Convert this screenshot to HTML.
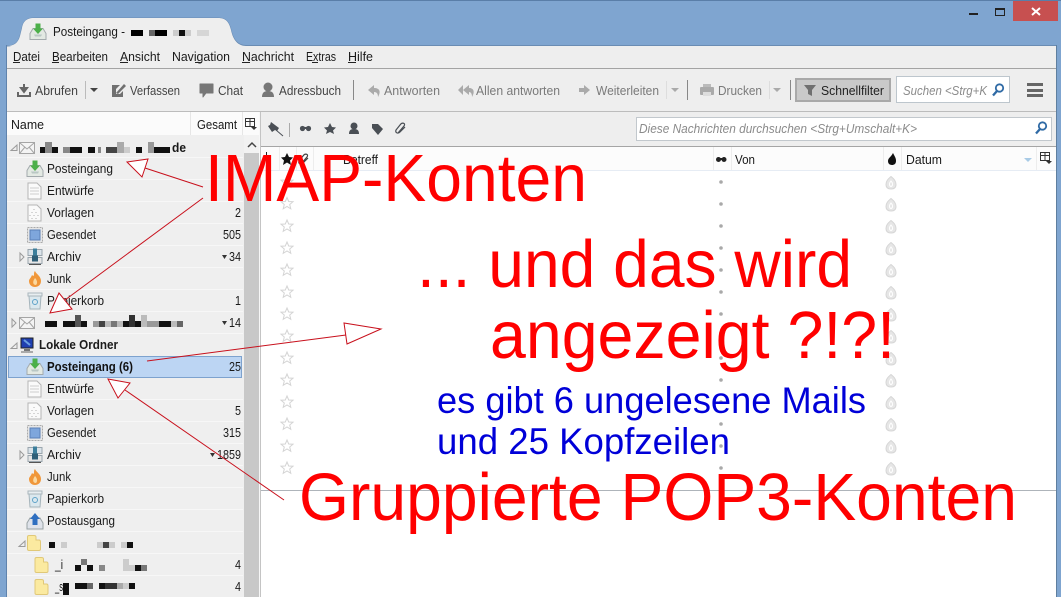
<!DOCTYPE html>
<html><head><meta charset="utf-8"><style>
html,body{margin:0;padding:0;background:#7fa5d0;overflow:hidden}
svg{display:block;position:absolute;left:0;top:0}
text{font-family:"Liberation Sans",sans-serif;font-size:12.5px;fill:#1a1a1a}
.h{fill:#8b8b8b;font-style:italic}
.d{fill:#444}.l{fill:#7a7a7a}
.r{fill:#f00;font-size:67px}.b{fill:#0000d8;font-size:37px}
</style></head><body>
<svg width="1061" height="597" viewBox="0 0 1061 597" xmlns="http://www.w3.org/2000/svg">
<defs>
<g id="inbox"><path d="M-8 2 L-5 -3 H5 L8 2 V8 H-8Z" fill="#e3e9e3" stroke="#a3aaad"/><path d="M-4 3 H4 L3 5 H-3Z" fill="#b9c7c4"/><path d="M-2.500 -8 H2.500 V-3 H5 L0 2.500 L-5 -3 H-2.500Z" fill="#4cb04a"/></g>
<g id="draft"><path d="M-6 -8 H3 L7 -4 V8 H-6Z" fill="#fafafa" stroke="#b5b5b5"/><path d="M-4 -3 H5 M-4 0 H5 M-4 3 H5" stroke="#cfcfcf"/></g>
<g id="tmpl"><path d="M-6 -8 H3 L7 -4 V8 H-6Z" fill="#fafafa" stroke="#b5b5b5"/><path d="M0 -4 V-3 M-2 -1 V0 M2 -1 V0 M-4 2 V3 M0 2 V3 M4 2 V3 M-2 5 V6 M2 5 V6" stroke="#b0b0b0"/></g>
<g id="sent"><rect x="-7.500" y="-7.500" width="15" height="15" fill="#e6e6e6" stroke="#aaa" stroke-dasharray="2 1"/><rect x="-5" y="-5" width="10" height="10" fill="#7ea6dc" stroke="#5a80b8"/></g>
<g id="arch"><rect x="-7" y="-7" width="14" height="6" fill="#dbe4ea" stroke="#9aa5ad"/><rect x="-7" y="1" width="14" height="6" fill="#e6e6e6" stroke="#9aa5ad"/><rect x="-2" y="-8" width="4" height="7" fill="#3d7f9c"/><rect x="-3" y="-1" width="6" height="6" fill="#2f5f78"/><path d="M-6 8 H6" stroke="#555"/></g>
<g id="junk"><path d="M0 -8 C1 -5 6 -3 6 2 C6 6 3 8 0 8 C-4 8 -6 5 -6 2 C-6 0 -4 -1 -3 -4 C-2 -3 -1 -3 -1 -4 C-1 -6 -1 -7 0 -8Z" fill="#f0973a"/><path d="M0 -1 C2 1 3 4 1 6 C-2 6 -3 3 0 -1Z" fill="#fbd9a0"/></g>
<g id="trash"><path d="M-6 -5 H6 L5 8 H-5Z" fill="#dbe8ee" stroke="#a5b4bb"/><rect x="-7" y="-8" width="14" height="3" fill="#e8eef1" stroke="#aab6bc"/><circle r="2.500" cy="1" fill="none" stroke="#5ea2c8"/></g>
<g id="out"><path d="M-8 2 L-5 -3 H5 L8 2 V8 H-8Z" fill="#dfe3ea" stroke="#9aa3a6"/><path d="M-2.500 4 V-2 H-5 L0 -8 L5 -2 H2.500 V4Z" fill="#2f6fc0"/></g>
<path id="fold" d="M-6.500 -6 Q-6.500 -7.500 -5 -7.500 H0 Q2 -7.500 2 -6 V-3 H5 Q6.500 -3 6.500 -1 V6 Q6.500 7.500 5 7.500 H-5 Q-6.500 7.500 -6.500 6Z" fill="#fbeaa0" stroke="#e0c878"/>
<g id="env"><rect x="-7.500" y="-5.500" width="15" height="11" fill="#f4f4f4" stroke="#a5a5a5"/><path d="M-7 -5 L0 1 L7 -5 M-7 5 L-2 -1 M7 5 L2 -1" fill="none" stroke="#a5a5a5"/></g>
<path id="tri" d="M0 -4 V4 L4 0Z" fill="none" stroke="#9a9a9a"/>
<path id="open" d="M3 -3 V2.500 H-3Z" fill="none" stroke="#9a9a9a"/>
<path id="star" d="M0 -6 L1.700 -2 L6 -1.800 L2.700 1 L3.800 5.300 L0 3 L-3.800 5.300 L-2.700 1 L-6 -1.800 L-1.700 -2Z" fill="#fff" stroke="#d4d4d4"/>
<g id="flame"><path d="M0 -6.500 C3 -4 5 -2 5 1.500 C5 4.500 3 6 0 6 C-3 6 -5 4.500 -5 1.500 C-5 -2 -3 -4 0 -6.500Z" fill="#e6e6e6" stroke="#d6d6d6"/><path d="M0 -2 C-2 0 -2 3 0 3.500 C2 3 2 0 0 -2Z" fill="none" stroke="#fff"/></g>
<g id="pick"><rect x="-4.500" y="-5.500" width="9" height="8" fill="none" stroke="#333"/><path d="M-4 -2.500 H4 M0 -5 V2" stroke="#333"/><path d="M1 3 H7 L4 6Z" fill="#333"/></g>
<g id="lens"><circle cx="1.500" cy="-2" r="3.700" fill="#fff" stroke="#2f6aa5" stroke-width="1.800"/><path d="M-1 1 L-5 5.500" stroke="#2f6aa5" stroke-width="2.300"/></g>
</defs>

<!-- window -->
<rect width="1061" height="597" fill="#7fa5d0"/>
<rect width="1061" height="1" fill="#5a7ea8"/>
<rect x="1013" y="1" width="45" height="20" fill="#c75050"/>
<path d="M1032 8 L1040 15 M1040 8 L1032 15" stroke="#fff" stroke-width="2"/>
<rect x="969" y="13" width="9" height="2" fill="#222"/>
<rect x="995.500" y="8.500" width="9" height="7" fill="none" stroke="#222"/><rect x="995" y="8" width="10" height="2" fill="#222"/>
<rect x="7" y="46" width="1049" height="551" fill="#eeeeee"/>
<rect x="6" y="45" width="1" height="552" fill="#5f83ad"/><rect x="1056" y="45" width="1" height="552" fill="#5f7f9f"/>
<path d="M7 46 C14 46 18 43 20 36 L22 28 C23 22 26 18 34 18 H218 C226 18 229 22 231 30 C233 40 238 45.500 246 45.500 H1056" fill="none" stroke="#6a8cb3"/>
<path d="M7 46 C14 46 18 43 20 36 L22 28 C23 22 26 18 34 18 H218 C226 18 229 22 231 30 C233 40 238 46 246 46Z" fill="#eeeeee"/>
<use href="#inbox" x="38" y="31.500"/>
<text lengthAdjust="spacingAndGlyphs" x="53" y="36" textLength="72">Posteingang -</text>
<rect x="131" y="30" width="12" height="6" fill="#000"/><rect x="149" y="30" width="6" height="6" fill="#666"/><rect x="155" y="30" width="12" height="6" fill="#000"/>
<rect x="173" y="30" width="6" height="6" fill="#ccc"/><rect x="179" y="30" width="6" height="6" fill="#111"/><rect x="185" y="30" width="6" height="6" fill="#ccc"/><rect x="197" y="30" width="12" height="6" fill="#d6d6d6"/>

<!-- menu -->
<text lengthAdjust="spacingAndGlyphs" x="13" y="61" textLength="27">Datei</text>
<text lengthAdjust="spacingAndGlyphs" x="52" y="61" textLength="56">Bearbeiten</text>
<text lengthAdjust="spacingAndGlyphs" x="120" y="61" textLength="40">Ansicht</text>
<text lengthAdjust="spacingAndGlyphs" x="172" y="61" textLength="58">Navigation</text>
<text lengthAdjust="spacingAndGlyphs" x="242" y="61" textLength="52">Nachricht</text>
<text lengthAdjust="spacingAndGlyphs" x="306" y="61" textLength="30">Extras</text>
<text lengthAdjust="spacingAndGlyphs" x="348" y="61" textLength="25">Hilfe</text>
<path d="M13 62.500 H20 M52 62.500 H59 M120 62.500 H128 M195 62.500 H201 M242 62.500 H250 M312 62.500 H318 M348 62.500 H356" stroke="#222"/>
<rect x="7" y="68" width="1049" height="1" fill="#a3a3a3"/>

<!-- toolbar -->
<path d="M24 84 V90 M21 88 L24 92 L27 88 Z" fill="#666" stroke="#666" stroke-width="2"/><path d="M18 92 V96 H30 V92" fill="none" stroke="#666" stroke-width="2"/>
<text lengthAdjust="spacingAndGlyphs" class="d" x="35" y="95" textLength="43">Abrufen</text>
<rect x="85" y="81" width="1" height="18" fill="#bbb"/><path d="M90 88 H98 L94 92Z" fill="#444"/>
<path d="M112 85 H120 L116 89 V94 H120 L123 91 V97 H112Z" fill="#707070"/><path d="M116 93 L124 84 L126 86 L118 94Z" fill="#707070"/>
<text lengthAdjust="spacingAndGlyphs" class="d" x="130" y="95" textLength="50">Verfassen</text>
<path d="M200 84 H213 V93 H206 L203 97 V93 H200Z" fill="#777" stroke="#777" stroke-linejoin="round"/>
<text lengthAdjust="spacingAndGlyphs" class="d" x="218" y="95" textLength="25">Chat</text>
<circle cx="268" cy="87" r="4.500" fill="#777"/><path d="M262 97 C262 92 265 91 268 91 C271 91 274 92 274 97Z" fill="#777"/>
<text lengthAdjust="spacingAndGlyphs" class="d" x="279" y="95" textLength="62">Adressbuch</text>
<rect x="353" y="80" width="1" height="20" fill="#888"/>
<path d="M374 85 L368 90 L374 95 V92 C377 92 378 94 378 97 C381 92 380 88 374 88Z" fill="#aaa"/>
<text lengthAdjust="spacingAndGlyphs" class="l" x="384" y="95" textLength="56">Antworten</text>
<path d="M463 85 L458 90 L463 95Z M469 85 L463 90 L469 95 V92 C471 92 472 94 472 97 C475 92 474 88 469 88Z" fill="#aaa"/>
<text lengthAdjust="spacingAndGlyphs" class="l" x="476" y="95" textLength="84">Allen antworten</text>
<path d="M579 88 H584 V85 L590 90 L584 95 V92 H579Z" fill="#aaa"/>
<text lengthAdjust="spacingAndGlyphs" class="l" x="596" y="95" textLength="63">Weiterleiten</text>
<rect x="666" y="81" width="1" height="18" fill="#ddd"/><path d="M671 88 H679 L675 92Z" fill="#aaa"/>
<rect x="687" y="80" width="1" height="20" fill="#888"/>
<rect x="703" y="84" width="8" height="4" fill="#bbb"/><rect x="700" y="87" width="14" height="8" rx="1" fill="#aaa"/><rect x="703" y="92" width="8" height="4" fill="#ddd"/>
<text lengthAdjust="spacingAndGlyphs" class="l" x="718" y="95" textLength="44">Drucken</text>
<rect x="769" y="81" width="1" height="18" fill="#ddd"/><path d="M773 88 H781 L777 92Z" fill="#aaa"/>
<rect x="790" y="80" width="1" height="20" fill="#888"/>
<rect x="796" y="79" width="94" height="22" fill="#c9c9c9" stroke="#a9a9a9" stroke-width="2"/>
<path d="M804 85 H816 L812 90 V96 L808 94 V90Z" fill="#707070"/>
<text lengthAdjust="spacingAndGlyphs" x="821" y="95" textLength="63" style="fill:#222">Schnellfilter</text>
<rect x="896.500" y="76.500" width="113" height="26" fill="#fff" stroke="#bdc6cd"/>
<text lengthAdjust="spacingAndGlyphs" class="h" x="903" y="95" textLength="84">Suchen &lt;Strg+K</text>
<use href="#lens" x="998" y="90"/>
<rect x="1027" y="83" width="16" height="3" fill="#666"/><rect x="1027" y="89" width="16" height="3" fill="#666"/><rect x="1027" y="94" width="16" height="3" fill="#666"/>
<rect x="7" y="111" width="1049" height="1" fill="#bcbcbc"/>

<!-- folder pane -->
<rect x="7" y="112" width="253" height="485" fill="#efefef"/>
<rect x="7" y="112" width="253" height="23" fill="#fbfbfb"/>
<rect x="190" y="112" width="1" height="23" fill="#e6e6e6"/><rect x="242" y="112" width="1" height="23" fill="#e6e6e6"/>
<text lengthAdjust="spacingAndGlyphs" x="11" y="129" textLength="33">Name</text>
<text lengthAdjust="spacingAndGlyphs" x="197" y="129" textLength="40">Gesamt</text>
<use href="#pick" x="250" y="124"/>
<rect x="244" y="135" width="15" height="18" fill="#f2f2f2"/>
<path d="M248 147 L252 143 L256 147" fill="none" stroke="#444" stroke-width="1.500"/>
<rect x="244" y="153" width="15" height="444" fill="#c8c8c8"/>
<rect x="259" y="112" width="2" height="485" fill="#f7f7f7"/><rect x="260" y="112" width="1" height="485" fill="#c4c4c4"/>
<path d="M7 157.500H243M7 179.500H243M7 201.500H243M7 223.500H243M7 245.500H243M7 267.500H243M7 289.500H243M7 311.500H243M7 333.500H243M7 399.500H243M7 421.500H243M7 443.500H243M7 465.500H243M7 487.500H243M7 509.500H243M7 531.500H243M7 553.500H243M7 575.500H243" stroke="#f7f7f7"/>

<use href="#open" x="14" y="148"/><use href="#env" x="27" y="148"/>
<g fill="#111"><rect x="40" y="147" width="5" height="6"/><rect x="52" y="147" width="6" height="6"/><rect x="70" y="147" width="12" height="6"/><rect x="88" y="147" width="7" height="6"/><rect x="136" y="147" width="6" height="6"/><rect x="154" y="147" width="16" height="6"/></g>
<g><rect x="45" y="142" width="7" height="11" fill="#888"/><rect x="63" y="147" width="7" height="6" fill="#888"/><rect x="98" y="147" width="3" height="6" fill="#888"/><rect x="106" y="147" width="11" height="6" fill="#444"/><rect x="117" y="142" width="7" height="11" fill="#aaa"/><rect x="124" y="147" width="6" height="6" fill="#ccc"/><rect x="148" y="142" width="6" height="11" fill="#999"/></g>
<text lengthAdjust="spacingAndGlyphs" x="172" y="152" textLength="14" style="font-weight:bold">de</text>

<use href="#inbox" x="35" y="168.500"/><text lengthAdjust="spacingAndGlyphs" x="47" y="173" textLength="66">Posteingang</text>
<use href="#draft" x="34" y="191"/><text lengthAdjust="spacingAndGlyphs" x="47" y="195" textLength="47">Entwürfe</text>
<use href="#tmpl" x="34" y="213"/><text lengthAdjust="spacingAndGlyphs" x="47" y="217" textLength="47">Vorlagen</text><text lengthAdjust="spacingAndGlyphs" x="235" y="217" textLength="6">2</text>
<use href="#sent" x="35" y="235"/><text lengthAdjust="spacingAndGlyphs" x="47" y="239" textLength="49">Gesendet</text><text lengthAdjust="spacingAndGlyphs" x="223" y="239" textLength="18">505</text>
<use href="#tri" x="20" y="257"/><use href="#arch" x="35" y="256.500"/><text lengthAdjust="spacingAndGlyphs" x="47" y="261" textLength="34">Archiv</text><path d="M222 255 H227 L224.500 259Z" fill="#333"/><text lengthAdjust="spacingAndGlyphs" x="229" y="261" textLength="12">34</text>
<use href="#junk" x="35" y="279"/><text lengthAdjust="spacingAndGlyphs" x="47" y="283" textLength="24">Junk</text>
<use href="#trash" x="35" y="301"/><text lengthAdjust="spacingAndGlyphs" x="47" y="305" textLength="57">Papierkorb</text><text lengthAdjust="spacingAndGlyphs" x="235" y="305" textLength="6">1</text>

<use href="#tri" x="12" y="323"/><use href="#env" x="27" y="323"/>
<g fill="#111"><rect x="45" y="321" width="12" height="6"/><rect x="63" y="321" width="12" height="6"/><rect x="81" y="321" width="6" height="6"/><rect x="123" y="321" width="6" height="6"/><rect x="135" y="321" width="6" height="6"/><rect x="159" y="321" width="12" height="6"/></g>
<g><rect x="75" y="315" width="6" height="12" fill="#555"/><rect x="93" y="321" width="6" height="6" fill="#999"/><rect x="99" y="321" width="6" height="6" fill="#444"/><rect x="105" y="321" width="6" height="6" fill="#bbb"/><rect x="111" y="321" width="6" height="6" fill="#777"/><rect x="117" y="321" width="6" height="6" fill="#bbb"/><rect x="129" y="315" width="6" height="12" fill="#333"/><rect x="141" y="315" width="6" height="12" fill="#bbb"/><rect x="147" y="321" width="12" height="6" fill="#999"/><rect x="171" y="321" width="6" height="6" fill="#bbb"/><rect x="177" y="321" width="6" height="6" fill="#666"/></g>
<path d="M222 321 H227 L224.500 325Z" fill="#333"/><text lengthAdjust="spacingAndGlyphs" x="229" y="327" textLength="12">14</text>

<use href="#open" x="14" y="346"/>
<rect x="21" y="338" width="12" height="10" fill="#1f3fb0" stroke="#222"/><path d="M24 340 L30 345" stroke="#6aa0e0" stroke-width="2"/><rect x="24" y="349" width="6" height="2" fill="#777"/><rect x="21" y="351" width="12" height="2" fill="#aaa"/>
<text lengthAdjust="spacingAndGlyphs" x="39" y="349" textLength="79" style="font-weight:bold">Lokale Ordner</text>

<rect x="8.500" y="356.500" width="233" height="21" fill="#bcd5f3" stroke="#7da2ce"/>
<use href="#inbox" x="35" y="366.500"/><text lengthAdjust="spacingAndGlyphs" x="47" y="371" textLength="86" style="font-weight:bold;fill:#111">Posteingang (6)</text><text lengthAdjust="spacingAndGlyphs" x="229" y="371" textLength="12">25</text>
<use href="#draft" x="34" y="389"/><text lengthAdjust="spacingAndGlyphs" x="47" y="393" textLength="47">Entwürfe</text>
<use href="#tmpl" x="34" y="411"/><text lengthAdjust="spacingAndGlyphs" x="47" y="415" textLength="47">Vorlagen</text><text lengthAdjust="spacingAndGlyphs" x="235" y="415" textLength="6">5</text>
<use href="#sent" x="35" y="433"/><text lengthAdjust="spacingAndGlyphs" x="47" y="437" textLength="49">Gesendet</text><text lengthAdjust="spacingAndGlyphs" x="223" y="437" textLength="18">315</text>
<use href="#tri" x="20" y="455"/><use href="#arch" x="35" y="454.500"/><text lengthAdjust="spacingAndGlyphs" x="47" y="459" textLength="34">Archiv</text><path d="M210 453 H215 L212.500 457Z" fill="#333"/><text lengthAdjust="spacingAndGlyphs" x="217" y="459" textLength="24">1859</text>
<use href="#junk" x="35" y="477"/><text lengthAdjust="spacingAndGlyphs" x="47" y="481" textLength="24">Junk</text>
<use href="#trash" x="35" y="499"/><text lengthAdjust="spacingAndGlyphs" x="47" y="503" textLength="57">Papierkorb</text>
<use href="#out" x="35" y="521"/><text lengthAdjust="spacingAndGlyphs" x="47" y="525" textLength="68">Postausgang</text>
<use href="#open" x="22" y="544"/><use href="#fold" x="34" y="543"/>
<g fill="#111"><rect x="49" y="542" width="6" height="6"/><rect x="103" y="542" width="6" height="6" fill="#444"/><rect x="127" y="542" width="6" height="6"/></g>
<g fill="#ccc"><rect x="61" y="542" width="6" height="6"/><rect x="97" y="542" width="6" height="6"/><rect x="109" y="542" width="6" height="6"/><rect x="121" y="542" width="6" height="6"/></g>
<use href="#fold" x="41.500" y="565"/><text lengthAdjust="spacingAndGlyphs" x="55" y="569" textLength="8">_i</text>
<g fill="#111"><rect x="75" y="565" width="6" height="6"/><rect x="87" y="565" width="6" height="6"/><rect x="81" y="559" width="6" height="6" fill="#777"/><rect x="99" y="565" width="6" height="6" fill="#888"/><rect x="123" y="559" width="6" height="12" fill="#ccc"/><rect x="129" y="565" width="6" height="6" fill="#ccc"/><rect x="135" y="565" width="6" height="6"/><rect x="141" y="565" width="6" height="6" fill="#777"/></g>
<text lengthAdjust="spacingAndGlyphs" x="235" y="569" textLength="6">4</text>
<use href="#fold" x="41.500" y="587"/><text lengthAdjust="spacingAndGlyphs" x="55" y="591" textLength="8">_s</text>
<g fill="#111"><rect x="63" y="583" width="6" height="12"/><rect x="75" y="583" width="12" height="6"/><rect x="87" y="583" width="6" height="6" fill="#666"/><rect x="99" y="583" width="6" height="6"/><rect x="105" y="583" width="12" height="6" fill="#333"/><rect x="117" y="583" width="6" height="6" fill="#aaa"/><rect x="123" y="583" width="6" height="6" fill="#ccc"/><rect x="129" y="583" width="6" height="6"/></g>
<text lengthAdjust="spacingAndGlyphs" x="235" y="591" textLength="6">4</text>

<!-- right pane filter bar -->
<g fill="#4a4f55">
<path d="M271 122 L279 128 L277 131 L275 130 L272 132 L268 126 L270 125Z"/><path d="M276 130 L283 136" stroke="#4a4f55" fill="none"/>
<rect x="289" y="123" width="1" height="14" fill="#aaa"/>
<path d="M303 128 H308" stroke="#4a4f55" stroke-width="2"/><circle cx="302.500" cy="128.500" r="2.600"/><circle cx="308.500" cy="128.500" r="2.600"/>
<path d="M330 123 L332 127 L336 127.500 L333 130.500 L334 134 L330 132 L326 134 L327 130.500 L324 127.500 L328 127Z"/>
<circle cx="354" cy="126" r="3.500"/><path d="M349 134 C349 130 351 129 354 129 C357 129 359 130 359 134Z"/>
<path d="M372 124 H378 L383 129 L378 135 L372 128Z"/>
<path d="M398 133 L404 126 C406 123 402 122 400 125 L396 130 C395 133 398 134 400 132 L405 127" fill="none" stroke="#4a4f55" stroke-width="1.200"/>
</g>
<rect x="636.500" y="117.500" width="415" height="23" fill="#fff" stroke="#c2c8cd"/>
<text lengthAdjust="spacingAndGlyphs" class="h" x="639" y="133" textLength="278">Diese Nachrichten durchsuchen &lt;Strg+Umschalt+K&gt;</text>
<use href="#lens" x="1041" y="128"/>
<rect x="261" y="146" width="795" height="1" fill="#a5a5a5"/>

<!-- thread pane -->
<rect x="261" y="147" width="795" height="450" fill="#fff"/>
<rect x="261" y="147" width="795" height="23" fill="#fcfcfc"/>
<rect x="261" y="170" width="795" height="1" fill="#e6ecf4"/>
<path d="M279.500 147V170M296.500 147V170M313.500 147V170M713.500 147V170M731.500 147V170M883.500 147V170M901.500 147V170M1036.500 147V170" stroke="#ededed"/>
<path d="M266.500 152 V157" stroke="#222"/>
<path d="M287 153 L289 157 L293 157.500 L290 160.500 L291 165 L287 162.500 L283 165 L284 160.500 L281 157.500 L285 157Z" fill="#111"/>
<path d="M301 164 L307 157 C309 154 305 153 303 156 L299 161 C298 164 301 165 303 163 L308 158" fill="none" stroke="#444" stroke-width="1.200"/>
<text lengthAdjust="spacingAndGlyphs" x="343" y="164" textLength="35">Betreff</text>
<path d="M719 159 H724" stroke="#222" stroke-width="2"/><circle cx="718.500" cy="159.500" r="2.500" fill="#222"/><circle cx="724" cy="159.500" r="2.500" fill="#222"/>
<text lengthAdjust="spacingAndGlyphs" x="735" y="164" textLength="20">Von</text>
<path d="M893 153 C895 157 896 158 896 161 C896 164 894 165 892 165 C889 165 888 163 888 161 C888 158 891 157 893 153Z" fill="#111"/>
<text lengthAdjust="spacingAndGlyphs" x="906" y="164" textLength="36">Datum</text>
<path d="M1024 158 H1032 L1028 162Z" fill="#a9cbe6"/>
<use href="#pick" x="1045" y="158"/>

<use href="#star" x="287" y="182"/><use href="#star" x="287" y="203.500"/><use href="#star" x="287" y="226"/><use href="#star" x="287" y="248"/><use href="#star" x="287" y="270"/><use href="#star" x="287" y="292"/><use href="#star" x="287" y="314"/><use href="#star" x="287" y="336"/><use href="#star" x="287" y="358"/><use href="#star" x="287" y="380"/><use href="#star" x="287" y="402"/><use href="#star" x="287" y="424"/><use href="#star" x="287" y="446"/><use href="#star" x="287" y="468"/>
<g fill="#a9a9a9"><circle cx="721" cy="182" r="1.800"/><circle cx="721" cy="204" r="1.800"/><circle cx="721" cy="226" r="1.800"/><circle cx="721" cy="248" r="1.800"/><circle cx="721" cy="270" r="1.800"/><circle cx="721" cy="292" r="1.800"/><circle cx="721" cy="314" r="1.800"/><circle cx="721" cy="336" r="1.800"/><circle cx="721" cy="358" r="1.800"/><circle cx="721" cy="380" r="1.800"/><circle cx="721" cy="402" r="1.800"/><circle cx="721" cy="424" r="1.800"/><circle cx="721" cy="446" r="1.800"/><circle cx="721" cy="468" r="1.800"/></g>
<use href="#flame" x="891" y="183"/><use href="#flame" x="891" y="205"/><use href="#flame" x="891" y="227"/><use href="#flame" x="891" y="249"/><use href="#flame" x="891" y="271"/><use href="#flame" x="891" y="293"/><use href="#flame" x="891" y="315"/><use href="#flame" x="891" y="337"/><use href="#flame" x="891" y="359"/><use href="#flame" x="891" y="381"/><use href="#flame" x="891" y="403"/><use href="#flame" x="891" y="425"/><use href="#flame" x="891" y="447"/><use href="#flame" x="891" y="469"/>
<rect x="261" y="490" width="795" height="1" fill="#aeb4ba"/>

<!-- annotations -->
<g stroke="#c8101c" stroke-width="1" fill="#fff">
<path d="M145 168 L203 187 M65 300 L203 198 M147 361 L346 335 M125 390 L284 500" fill="none"/>
<path d="M127 162 L148 159 L142 177Z"/>
<path d="M50 313 L59 293 L72 309Z"/>
<path d="M381 329 L344 323 L347 344Z"/>
<path d="M108 379 L130 383 L118 398Z"/>
</g>
<text lengthAdjust="spacingAndGlyphs" class="r" x="205" y="201" textLength="382">IMAP-Konten</text>
<text lengthAdjust="spacingAndGlyphs" class="r" x="417" y="287" textLength="435">... und das wird</text>
<text lengthAdjust="spacingAndGlyphs" class="r" x="490" y="358" textLength="405">angezeigt ?!?!</text>
<text lengthAdjust="spacingAndGlyphs" class="b" x="437" y="413" textLength="429">es gibt 6 ungelesene Mails</text>
<text lengthAdjust="spacingAndGlyphs" class="b" x="437" y="454" textLength="293">und 25 Kopfzeilen</text>
<text lengthAdjust="spacingAndGlyphs" class="r" x="299" y="520" textLength="718">Gruppierte POP3-Konten</text>
</svg>
</body></html>
